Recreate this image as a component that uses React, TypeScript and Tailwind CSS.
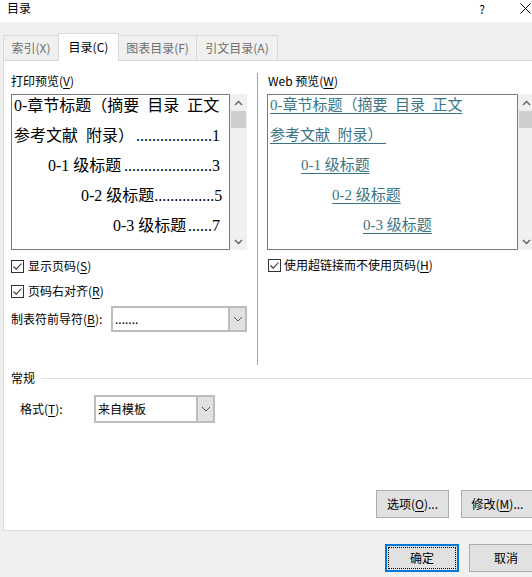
import React from "react";

function Check() {
  return (
    <span className="w-[13px] h-[13px] shrink-0 border border-[#333333] bg-white flex items-center justify-center">
      <svg width="11" height="11" viewBox="0 0 11 11">
        <path d="M1.5 5.5 L4.2 8.2 L9.5 2.5" stroke="#333333" strokeWidth="1.1" fill="none" />
      </svg>
    </span>
  );
}

function U({ c }: { c: string }) {
  return <span className="underline underline-offset-[2px]">{c}</span>;
}

function ScrollBar() {
  return (
    <div className="w-[17px] h-full bg-[#f0f0f0] flex flex-col items-center">
      <div className="h-[17px] w-full flex items-center justify-center">
        <svg width="9" height="6" viewBox="0 0 9 6">
          <path d="M1 5 L4.5 1.5 L8 5" stroke="#606060" strokeWidth="1.4" fill="none" />
        </svg>
      </div>
      <div className="w-[15px] h-[17px] bg-[#cdcdcd]" />
      <div className="flex-1" />
      <div className="h-[17px] w-full flex items-center justify-center">
        <svg width="9" height="6" viewBox="0 0 9 6">
          <path d="M1 1 L4.5 4.5 L8 1" stroke="#606060" strokeWidth="1.4" fill="none" />
        </svg>
      </div>
    </div>
  );
}

function SelectArrow() {
  return (
    <div className="w-[17px] h-full bg-[#e1e1e1] border-l-2 border-[#bdbdbd] flex items-center justify-center">
      <svg width="10" height="6" viewBox="0 0 10 6">
        <path d="M1 1 L5 5 L9 1" stroke="#555555" strokeWidth="1" fill="none" />
      </svg>
    </div>
  );
}

function LeftLine({ pl, text, dots, num }: { pl: string; text: string; dots?: string; num?: string }) {
  return (
    <div className={`flex h-[30px] items-center whitespace-pre ${pl}`}>
      <span>{text}</span>
      {num !== undefined && (
        <span className="ml-auto">
          {dots}
          {num}
        </span>
      )}
    </div>
  );
}

function RightLine({ pl, text }: { pl: string; text: string }) {
  return (
    <div className={`flex h-[30px] items-center whitespace-pre ${pl}`}>
      <span className="underline underline-offset-[3px] decoration-[#3b7585]">{text}</span>
    </div>
  );
}

export default function App() {
  return (
    <div className="w-[532px] h-[577px] overflow-hidden bg-[#f0f0f0] font-['Noto_Sans_CJK_SC',sans-serif] text-[12px] text-black">
      <div className="w-[550px]">
        {/* title bar */}
        <div className="h-[22px] bg-white flex items-start">
          <span className="ml-[7px] leading-[16px]">目录</span>
          <span className="flex-1" />
          <span className="leading-[17px] text-[12px]">?</span>
          <span className="ml-[35px] mr-[19px] mt-[3px]">
            <svg width="11" height="11" viewBox="0 0 11 11">
              <path d="M0.5 0.5 L10.5 10.5 M10.5 0.5 L0.5 10.5" stroke="#000" strokeWidth="1" />
            </svg>
          </span>
        </div>

        {/* tabs */}
        <div className="mt-[11px] h-[27px] flex items-end pl-[3px]">
          <div className="w-[55px] h-[25px] border-l border-t border-[#d9d9d9] bg-[#f0f0f0] text-[#6d6d6d] flex items-center justify-center leading-[16px]">
            索引(X)
          </div>
          <div className="relative z-10 -mb-px w-[61px] h-[28px] bg-white border border-b-0 border-[#d9d9d9] flex items-center justify-center leading-[16px] pb-[1px]">
            目录(C)
          </div>
          <div className="w-[78px] h-[25px] border-t border-r border-[#d9d9d9] bg-[#f0f0f0] text-[#6d6d6d] flex items-center justify-center leading-[16px]">
            图表目录(F)
          </div>
          <div className="w-[81px] h-[25px] border-t border-r border-[#d9d9d9] bg-[#f0f0f0] text-[#6d6d6d] flex items-center justify-center leading-[16px]">
            引文目录(A)
          </div>
        </div>

        {/* panel */}
        <div className="ml-[3px] w-[541px] h-[471px] bg-white border border-[#d9d9d9] flex flex-col">
          <div className="flex h-[304px]">
            {/* left column */}
            <div className="w-[243px] pl-[7px] pt-[12px] flex flex-col">
              <div className="h-[16px] leading-[16px]">
                打印预览(<U c="V" />)
              </div>
              <div className="mt-[5px] h-[156px] flex">
                <div className="w-[219px] h-full border border-[#7a7a7a] overflow-hidden pl-[2px] pr-[9px] font-['Liberation_Serif','Noto_Sans_CJK_SC',serif] text-[16px] leading-[30px]">
                  <div className="-mt-[4px]">
                    <LeftLine pl="" text="0-章节标题（摘要  目录  正文" />
                    <LeftLine pl="" text="参考文献  附录）" dots="..................." num="1" />
                    <LeftLine pl="pl-[34px]" text="0-1 级标题" dots="......................" num="3" />
                    <LeftLine pl="pl-[67px]" text="0-2 级标题" dots="..............." num="5" />
                    <LeftLine pl="pl-[99px]" text="0-3 级标题" dots="......" num="7" />
                  </div>
                </div>
                <ScrollBar />
              </div>
              <div className="mt-[8px] h-[16px] flex items-center">
                <Check />
                <span className="ml-[4px] leading-[16px]">
                  显示页码(<U c="S" />)
                </span>
              </div>
              <div className="mt-[9px] h-[16px] flex items-center">
                <Check />
                <span className="ml-[4px] leading-[16px]">
                  页码右对齐(<U c="R" />)
                </span>
              </div>
              <div className="mt-[7px] h-[26px] flex items-center">
                <span className="w-[100px] leading-[16px]">
                  制表符前导符(<U c="B" />):
                </span>
                <div className="w-[136px] h-[26px] border-2 border-[#bdbdbd] bg-white flex">
                  <div className="flex-1 flex items-center pl-[2px] leading-[16px]">.......</div>
                  <SelectArrow />
                </div>
              </div>
            </div>

            {/* divider */}
            <div className="ml-[10px] mt-[12px] w-px bg-[#a0a0a0]" />

            {/* right column */}
            <div className="ml-[9px] flex-1 pr-[8px] pt-[12px] flex flex-col">
              <div className="h-[16px] leading-[16px] pl-[1px]">
                Web 预览(<U c="W" />)
              </div>
              <div className="mt-[5px] h-[156px] flex">
                <div className="flex-1 h-full border border-[#7a7a7a] overflow-hidden pl-[2px] font-['Liberation_Serif','Noto_Sans_CJK_SC',serif] text-[15px] leading-[30px] text-[#3b7585]">
                  <div className="-mt-[5px]">
                    <RightLine pl="" text="0-章节标题（摘要  目录  正文" />
                    <RightLine pl="" text="参考文献  附录） " />
                    <RightLine pl="pl-[31px]" text="0-1 级标题" />
                    <RightLine pl="pl-[62px]" text="0-2 级标题" />
                    <RightLine pl="pl-[93px]" text="0-3 级标题" />
                  </div>
                </div>
                <ScrollBar />
              </div>
              <div className="mt-[7px] h-[16px] flex items-center pl-[1px]">
                <Check />
                <span className="ml-[3px] leading-[16px]">
                  使用超链接而不使用页码(<U c="H" />)
                </span>
              </div>
            </div>
          </div>

          {/* 常规 */}
          <div className="mt-[5px] h-[16px] pl-[7px] flex items-center">
            <span className="leading-[16px]">常规</span>
            <div className="ml-[6px] flex-1 h-px bg-[#dcdcdc]" />
          </div>
          <div className="mt-[9px] h-[28px] pl-[16px] flex items-center">
            <span className="w-[74px] leading-[16px]">
              格式(<U c="T" />):
            </span>
            <div className="w-[121px] h-[28px] border-2 border-[#bdbdbd] bg-white flex">
              <div className="flex-1 flex items-center pl-[2px] leading-[16px]">来自模板</div>
              <SelectArrow />
            </div>
          </div>

          {/* buttons inside panel */}
          <div className="mt-auto pb-[12px] pr-[9px] flex justify-end gap-[12px]">
            <div className="w-[73px] h-[28px] bg-[#e1e1e1] border border-[#adadad] flex items-center justify-center leading-[16px]">
              选项(<U c="O" />)...
            </div>
            <div className="w-[73px] h-[28px] bg-[#e1e1e1] border border-[#adadad] flex items-center justify-center leading-[16px]">
              修改(<U c="M" />)...
            </div>
          </div>
        </div>

        {/* bottom buttons */}
        <div className="mt-[13px] pr-[7px] flex justify-end gap-[10px]">
          <div className="w-[74px] h-[28px] bg-[#e1e1e1] border-2 border-[#0078d7] flex p-[1px]">
            <div className="flex-1 border border-dotted border-black flex items-center justify-center leading-[16px]">
              确定
            </div>
          </div>
          <div className="w-[74px] h-[28px] bg-[#e1e1e1] border border-[#adadad] flex items-center justify-center leading-[16px]">
            取消
          </div>
        </div>
      </div>
    </div>
  );
}
